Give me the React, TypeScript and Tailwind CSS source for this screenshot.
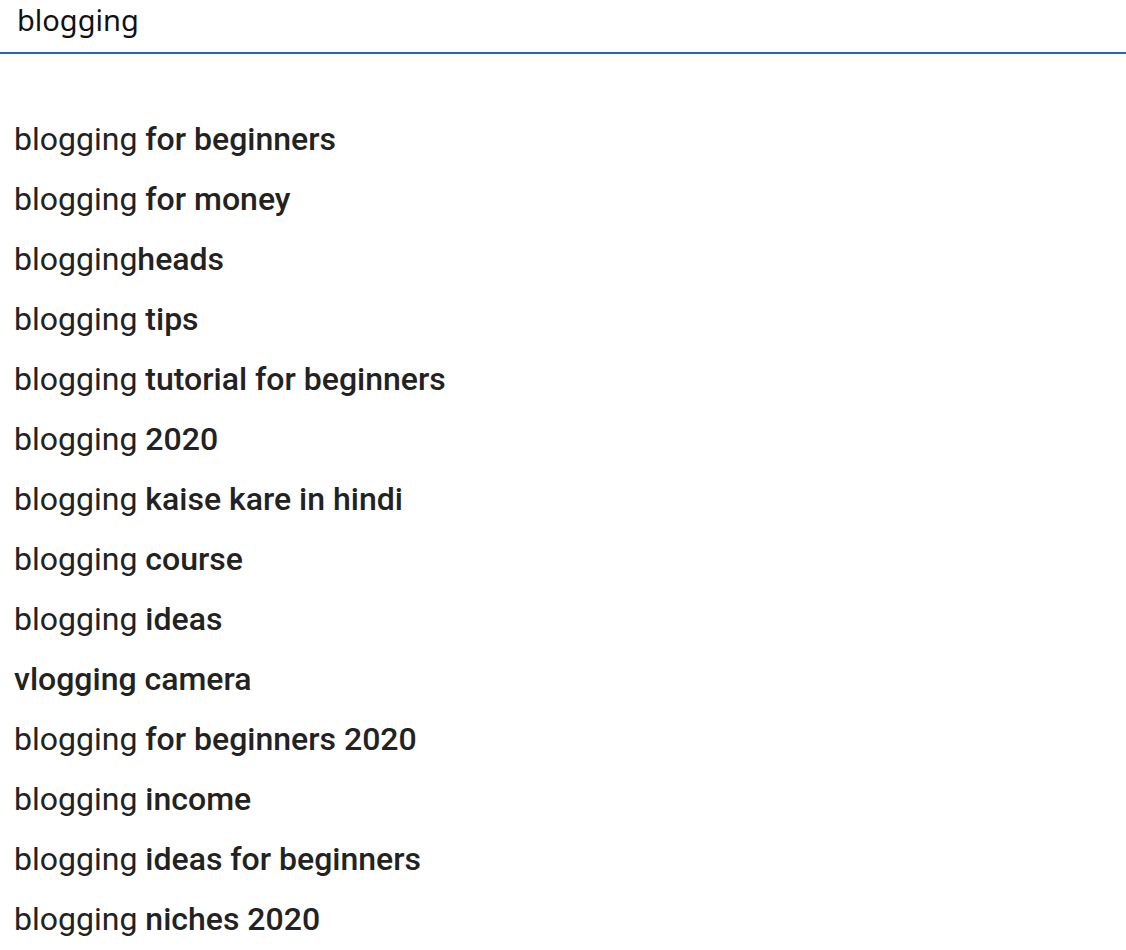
import React from 'react';

type Suggestion = { prefix: string; rest: string; boldAll?: boolean };

const suggestions: Suggestion[] = [
  { prefix: 'blogging', rest: ' for beginners' },
  { prefix: 'blogging', rest: ' for money' },
  { prefix: 'blogging', rest: 'heads' },
  { prefix: 'blogging', rest: ' tips' },
  { prefix: 'blogging', rest: ' tutorial for beginners' },
  { prefix: 'blogging', rest: ' 2020' },
  { prefix: 'blogging', rest: ' kaise kare in hindi' },
  { prefix: 'blogging', rest: ' course' },
  { prefix: 'blogging', rest: ' ideas' },
  { prefix: 'vlogging', rest: ' camera', boldAll: true },
  { prefix: 'blogging', rest: ' for beginners 2020' },
  { prefix: 'blogging', rest: ' income' },
  { prefix: 'blogging', rest: ' ideas for beginners' },
  { prefix: 'blogging', rest: ' niches 2020' },
];

const App: React.FC = () => {
  return (
    <div className="w-[1126px] h-[950px] bg-white overflow-hidden">
      <div className="h-[54px] border-b-2 border-[#2a64b4] pl-[17px] flex items-start">
        <input
          type="text"
          defaultValue="blogging"
          className="w-full h-[40px] outline-none bg-transparent text-[29px] text-[#111] font-['Noto_Sans',sans-serif]"
        />
      </div>
      <ul className="pt-[55px] pl-[14px] font-['Roboto',sans-serif] text-[32px] leading-[60px] text-[#222]">
        {suggestions.map((s, idx) => (
          <li key={idx} className="whitespace-pre">
            <span className={s.boldAll ? 'font-medium' : ''}>{s.prefix}</span>
            <span className="font-medium">{s.rest}</span>
          </li>
        ))}
      </ul>
    </div>
  );
};

export default App;
